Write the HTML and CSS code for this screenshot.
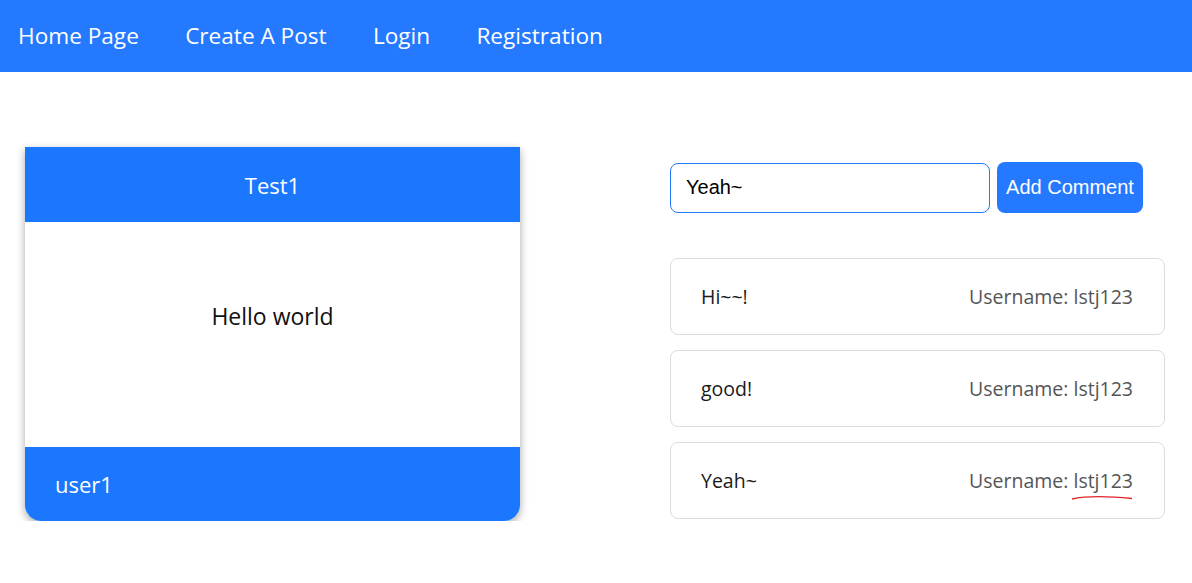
FILE: index.html
```html
<!DOCTYPE html>
<html>
<head>
<meta charset="utf-8">
<link rel="stylesheet" href="styles.css">
</head>
<body>
<nav class="nav">
  <a class="nav-link" href="#">Home Page</a>
  <a class="nav-link" href="#">Create A Post</a>
  <a class="nav-link" href="#">Login</a>
  <a class="nav-link" href="#">Registration</a>
</nav>
<main class="main">
  <section class="post">
    <div class="post-head">Test1</div>
    <div class="post-body">Hello world</div>
    <div class="post-foot">user1</div>
  </section>
  <section class="comments">
    <form class="comment-form">
      <input class="comment-input" type="text" value="Yeah~">
      <button class="comment-btn" type="button">Add Comment</button>
    </form>
    <div class="comment">
      <span class="comment-text">Hi~~!</span>
      <span class="comment-user">Username: lstj123</span>
    </div>
    <div class="comment">
      <span class="comment-text">good!</span>
      <span class="comment-user">Username: lstj123</span>
    </div>
    <div class="comment">
      <span class="comment-text">Yeah~</span>
      <span class="comment-user">Username: <span class="spell">lstj123<svg class="squiggle" width="62" height="6" viewBox="0 0 62 6"><path d="M1 4 C 15 1, 35 1, 61 3.5" stroke="#e0262a" stroke-width="1.3" fill="none"/></svg></span></span>
    </div>
  </section>
</main>
</body>
</html>
```

FILE: styles.css
```css
* { box-sizing: border-box; }
body {
  margin: 0;
  font-family: "Open Sans", "Noto Sans", sans-serif;
  background: #fff;
}
.nav {
  height: 72px;
  background: #2479ff;
  display: flex;
  align-items: center;
  padding-left: 18px;
  padding-bottom: 2px;
  gap: 46.3px;
}
.nav-link {
  color: #fff;
  text-decoration: none;
  font-size: 22.6px;
}
.main {
  display: flex;
  justify-content: space-between;
  padding: 75px 27px 0 25px;
}
.post {
  width: 495px;
  box-shadow: 0 3px 9px rgba(0,0,0,0.35);
  border-radius: 0 0 16px 16px;
  font-size: 22px;
}
.post-head {
  height: 75px;
  background: #1c77ff;
  color: #fff;
  display: flex;
  align-items: center;
  justify-content: center;
}
.post-body {
  height: 225px;
  display: flex;
  align-items: center;
  justify-content: center;
  padding-bottom: 38px;
  color: #111;
  background: #fff;
  font-size: 23px;
}
.post-foot {
  height: 74px;
  background: #1c77ff;
  color: #fff;
  display: flex;
  align-items: center;
  padding-left: 30px;
  border-radius: 0 0 16px 16px;
}
.comments {
  width: 495px;
  display: flex;
  flex-direction: column;
  gap: 15px;
}
.comment-form {
  display: flex;
  gap: 7px;
  margin-top: 15px;
  margin-bottom: 30px;
  align-items: center;
}
.comment-input {
  width: 320px;
  height: 50px;
  border: 1px solid #2479ff;
  border-radius: 8px;
  padding: 0 15px;
  font-family: "Liberation Sans", Arial, sans-serif;
  font-size: 20px;
  color: #000;
  outline: none;
}
.comment-btn {
  width: 146px;
  height: 51px;
  border: none;
  border-radius: 8px;
  background: #2479ff;
  color: #fff;
  font-family: "Liberation Sans", Arial, sans-serif;
  font-size: 20px;
  padding: 0;
}
.comment {
  height: 77px;
  border: 1px solid #dcdcdc;
  border-radius: 8px;
  display: flex;
  align-items: center;
  justify-content: space-between;
  padding: 0 31px 0 30px;
  font-size: 19.5px;
}
.comment-text { color: #1a1a1a; }
.comment-user { color: #555; }
.spell { position: relative; }
.squiggle {
  position: absolute;
  left: -2px;
  bottom: -7px;
}
```
